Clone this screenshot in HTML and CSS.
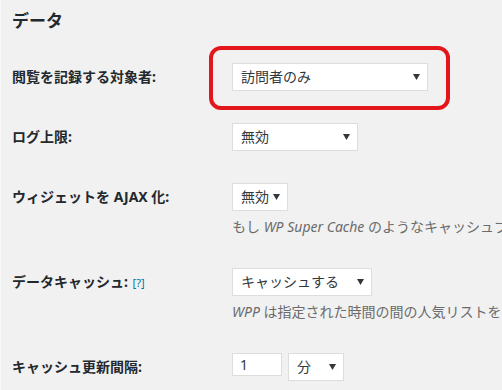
FILE: index.html
```html
<!DOCTYPE html>
<html>
<head>
    <title>データ設定</title>
    <link rel="stylesheet" href="styles.css">
</head>
<body>
    <div class="wrap">
        <h2>データ</h2>

        <div class="form-table">
            <!-- Log visitors -->
            <div class="row">
                <div class="label">閲覧を記録する対象者:</div>
                <div class="field">
                    <div class="marked">
                        <div class="select select-visitors">
                            <span>訪問者のみ</span>
                            <svg class="arrow" width="7" height="6" viewBox="0 0 7 6"><path d="M0 0h7L3.5 6z"/></svg>
                        </div>
                        <span class="mark"></span>
                    </div>
                </div>
            </div>

            <!-- Log limit -->
            <div class="row">
                <div class="label">ログ上限:</div>
                <div class="field">
                    <div class="select select-limit">
                        <span>無効</span>
                        <svg class="arrow" width="7" height="6" viewBox="0 0 7 6"><path d="M0 0h7L3.5 6z"/></svg>
                    </div>
                </div>
            </div>

            <!-- Ajax widget -->
            <div class="row">
                <div class="label">ウィジェットを AJAX 化:</div>
                <div class="field">
                    <div class="select select-small">
                        <span>無効</span>
                        <svg class="arrow" width="7" height="6" viewBox="0 0 7 6"><path d="M0 0h7L3.5 6z"/></svg>
                    </div>
                    <p class="description">もし <em>WP Super Cache</em> のようなキャッシュプラグインをお使いの場合は、有効にしてください。</p>
                </div>
            </div>

            <!-- Data cache -->
            <div class="row">
                <div class="label">データキャッシュ: <a class="help" href="#">[?]</a></div>
                <div class="field">
                    <div class="select select-cache">
                        <span>キャッシュする</span>
                        <svg class="arrow" width="7" height="6" viewBox="0 0 7 6"><path d="M0 0h7L3.5 6z"/></svg>
                    </div>
                    <p class="description"><em>WPP</em> は指定された時間の間の人気リストをキャッシュします。</p>
                </div>
            </div>

            <!-- Cache interval -->
            <div class="row">
                <div class="label">キャッシュ更新間隔:</div>
                <div class="field inline">
                    <input type="text" class="interval" value="1">
                    <div class="select select-small">
                        <span>分</span>
                        <svg class="arrow" width="7" height="6" viewBox="0 0 7 6"><path d="M0 0h7L3.5 6z"/></svg>
                    </div>
                </div>
            </div>
        </div>
    </div>
</body>
</html>
```

FILE: styles.css
```css
* {
    margin: 0;
    padding: 0;
    box-sizing: border-box;
}

html, body {
    overflow: hidden;
}

body {
    font-family: "Noto Sans", "Noto Sans CJK JP", sans-serif;
    font-size: 14px;
    background: #f1f1f1;
    color: #23282d;
    border-left: 1px solid #f8f8f8;
}

.wrap {
    padding: 8px 0 0 11px;
}

h2 {
    font-size: 17px;
    font-weight: bold;
    line-height: 26px;
    margin-bottom: 13px;
}

.row {
    display: grid;
    grid-template-columns: 220px 1fr;
    padding: 16px 0;
}

.label {
    font-weight: bold;
    line-height: 28px;
    white-space: nowrap;
}

.help {
    font-size: 11px;
    font-weight: normal;
    color: #0073aa;
    text-decoration: none;
    margin-left: 1px;
}

.field {
    min-width: 0;
}

.field.inline {
    display: flex;
    align-items: flex-start;
    gap: 6px;
}

.select {
    display: flex;
    align-items: center;
    justify-content: space-between;
    height: 28px;
    padding: 0 7px 0 8px;
    background: #fff;
    border: 1px solid #ddd;
    color: #32373c;
    line-height: 26px;
    white-space: nowrap;
}

.select .arrow {
    fill: #32373c;
    flex-shrink: 0;
}

.select-visitors { width: 196px; }
.select-limit { width: 126px; }
.select-small { width: 56px; }
.select-cache { width: 140px; }

.marked {
    position: relative;
    width: 196px;
}

.mark {
    position: absolute;
    top: -17px;
    left: -23px;
    width: 241px;
    height: 64px;
    border: 4px solid #e3161b;
    border-radius: 12px;
}

.description {
    margin-top: 6px;
    line-height: 19px;
    color: #6b6b6b;
    white-space: nowrap;
}

.description em {
    font-style: italic;
}

.interval {
    width: 50px;
    height: 23px;
    padding: 0 7px;
    border: 1px solid #ddd;
    background: #fff;
    font-family: inherit;
    font-size: 14px;
    color: #32373c;
}
```
